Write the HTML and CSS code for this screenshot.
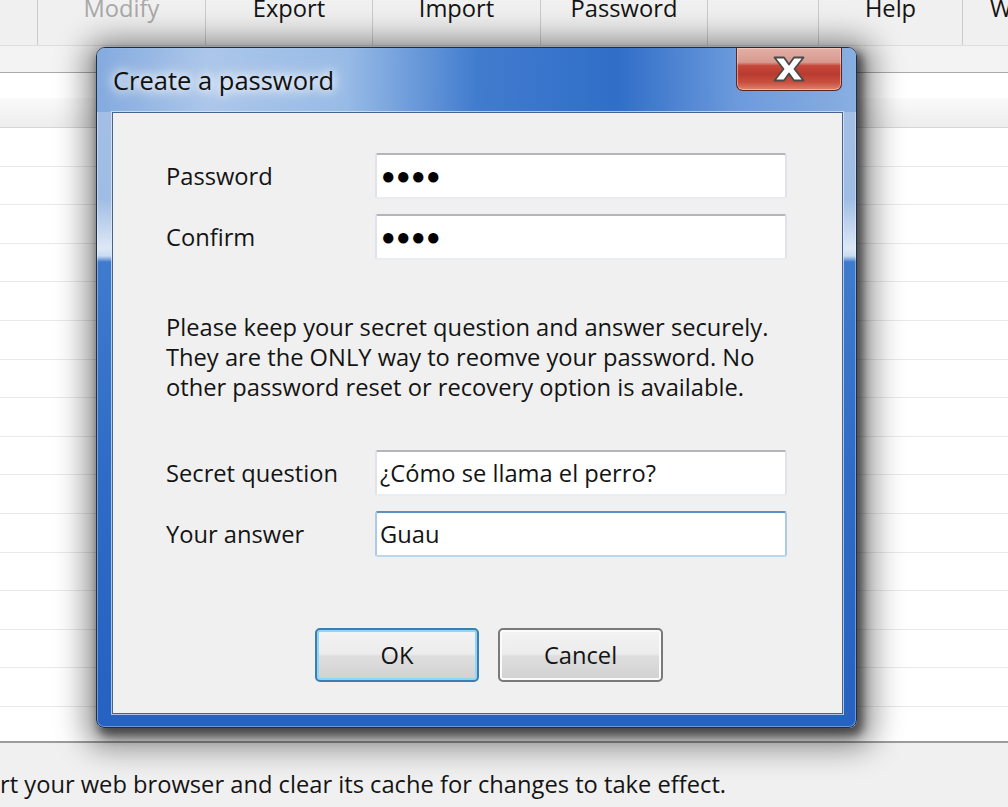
FILE: index.html
```html
<!DOCTYPE html>
<html lang="en">
<head>
<meta charset="utf-8">
<title>Create a password</title>
<link rel="stylesheet" href="styles.css">
</head>
<body>
<div class="app">
  <div class="toolbar">
    <div class="tb-item tb-first"></div>
    <div class="tb-item tb-wide disabled">Modify</div>
    <div class="tb-item tb-wide2">Export</div>
    <div class="tb-item tb-wide">Import</div>
    <div class="tb-item tb-wide2">Password</div>
    <div class="tb-item tb-blank"></div>
    <div class="tb-item tb-help">Help</div>
    <div class="tb-item tb-last">W</div>
  </div>
  <div class="subbar"></div>
  <div class="grid">
    <div class="grid-top"></div>
    <div class="grid-header"></div>
    <div class="row"></div>
    <div class="row"></div>
    <div class="row"></div>
    <div class="row"></div>
    <div class="row"></div>
    <div class="row"></div>
    <div class="row"></div>
    <div class="row"></div>
    <div class="row"></div>
    <div class="row"></div>
    <div class="row"></div>
    <div class="row"></div>
    <div class="row"></div>
    <div class="row"></div>
    <div class="row"></div>
    <div class="row"></div>
  </div>
  <div class="statusbar">rt your web browser and clear its cache for changes to take effect.</div>
</div>

<div class="dialog">
  <div class="titlebar">
    <div class="title">Create a password</div>
    <div class="close">
      <svg width="32" height="26" viewBox="0 0 32 26">
        <polygon points="1.5,1.5 11,1.5 16,8.5 21,1.5 30.5,1.5 21.5,13 30.5,24.5 21,24.5 16,17.5 11,24.5 1.5,24.5 10.5,13" fill="#ffffff" stroke="#4a4a4a" stroke-width="1.8" stroke-linejoin="round"/>
      </svg>
    </div>
  </div>
  <div class="client">
    <div class="form">
      <div class="label">Password</div>
      <div class="textbox"><span class="dots">●●●●</span></div>
      <div class="label">Confirm</div>
      <div class="textbox"><span class="dots">●●●●</span></div>
    </div>
    <p class="note">Please keep your secret question and answer securely.<br>They are the ONLY way to reomve your password. No<br>other password reset or recovery option is available.</p>
    <div class="form form-second">
      <div class="label">Secret question</div>
      <div class="textbox">¿Cómo se llama el perro?</div>
      <div class="label">Your answer</div>
      <div class="textbox focused">Guau</div>
    </div>
    <div class="buttons">
      <button class="btn btn-default">OK</button>
      <button class="btn btn-cancel">Cancel</button>
    </div>
  </div>
</div>
</body>
</html>
```

FILE: styles.css
```css
html, body {
  margin: 0;
  padding: 0;
}

body {
  width: 1008px;
  height: 807px;
  overflow: hidden;
  position: relative;
  background: #ffffff;
  font-family: "Open Sans", "Noto Sans", sans-serif;
  font-size: 23.7px;
  color: #141414;
}

.app {
  display: flex;
  flex-direction: column;
  height: 807px;
}

/* ---------- toolbar ---------- */
.toolbar {
  display: flex;
  height: 46px;
  flex: none;
  background: #f0f0f0;
  border-bottom: 1px solid #dedede;
  box-sizing: border-box;
  overflow: hidden;
}

.tb-item {
  flex: none;
  box-sizing: border-box;
  border-right: 1px solid #cbcbcb;
  text-align: center;
  line-height: 17px;
  white-space: nowrap;
  color: #141414;
}

.tb-item.disabled { color: #a9a9a9; }
.tb-first { width: 38px; }
.tb-wide { width: 168px; }
.tb-wide2 { width: 167px; }
.tb-blank { width: 111px; }
.tb-help { width: 144px; }
.tb-last {
  flex: 1;
  border-right: none;
  text-align: left;
  padding-left: 27px;
}

.subbar {
  flex: none;
  height: 27px;
  box-sizing: border-box;
  background: #f3f3f3;
  border-bottom: 1px solid #a9a9a9;
}

/* ---------- grid ---------- */
.grid {
  flex: 1;
  overflow: hidden;
  background: #ffffff;
  border-bottom: 2px solid #9c9c9c;
}

.grid-top { height: 25px; }

.grid-header {
  height: 30px;
  box-sizing: border-box;
  background: linear-gradient(180deg, #fafafa, #ededed);
  border-bottom: 1px solid #d6d6d6;
}

.row {
  height: 38.6px;
  box-sizing: border-box;
  border-bottom: 1px solid #e9e9e9;
}

.statusbar {
  flex: none;
  height: 64px;
  box-sizing: border-box;
  padding-top: 26px;
  line-height: 30px;
  background: #f0f0f0;
  white-space: nowrap;
  overflow: hidden;
}

/* ---------- dialog ---------- */
.dialog {
  position: absolute;
  left: 96px;
  top: 47px;
  width: 761px;
  height: 681px;
  box-sizing: border-box;
  border: 1px solid #1f2f47;
  border-radius: 9px 9px 8px 8px;
  background: linear-gradient(180deg,
    #a6c1e6 0px,
    #9fbce4 150px,
    #dce8f6 200px,
    #c9dbf0 208px,
    #3f7bcd 214px,
    #2f6cc6 420px,
    #2562c1 100%);
  box-shadow:
    4px 6px 10px 2px rgba(0, 0, 0, 0.55),
    3px 6px 30px 14px rgba(0, 0, 0, 0.42),
    inset 0 0 0 1px rgba(255, 255, 255, 0.35);
  display: flex;
  flex-direction: column;
}

.titlebar {
  flex: none;
  height: 64px;
  display: flex;
  align-items: flex-start;
  border-radius: 8px 8px 0 0;
  background: linear-gradient(90deg,
    rgba(128, 168, 222, 0.9) 0px,
    rgba(172, 199, 234, 0.9) 110px,
    rgba(150, 186, 230, 0.9) 250px,
    rgba(60, 120, 205, 0.95) 380px,
    rgba(48, 110, 200, 1) 520px,
    rgba(105, 152, 219, 0.95) 640px,
    rgba(134, 173, 225, 0.9) 100%);
}

.title {
  align-self: center;
  padding-left: 16px;
  font-size: 25.5px;
  color: #111111;
  white-space: nowrap;
  text-shadow: 0 0 8px #ffffff, 0 0 14px rgba(255, 255, 255, 0.95), 0 0 22px rgba(255, 255, 255, 0.8);
}

.close {
  margin-left: auto;
  margin-right: 14px;
  width: 106px;
  height: 43px;
  box-sizing: border-box;
  border: 1px solid #5b2620;
  border-top: none;
  border-radius: 0 0 7px 7px;
  background: linear-gradient(180deg,
    #e3b0a7 0%,
    #d7998f 34%,
    #c6493c 42%,
    #b93a2e 62%,
    #c9503f 82%,
    #de8470 100%);
  box-shadow: inset 0 0 0 1px rgba(255, 215, 205, 0.55);
  display: flex;
  align-items: center;
  justify-content: center;
}

.close svg { display: block; }

.client {
  flex: 1;
  margin: 0 13px 13px 15px;
  background: #f0f0f0;
  border: 1px solid #45638b;
  box-shadow: 0 0 0 1px rgba(225, 236, 250, 0.7);
  padding: 40px 0 0 53px;
}

.form {
  display: grid;
  grid-template-columns: 209px 412px;
  grid-auto-rows: 46px;
  row-gap: 15px;
  align-items: center;
}

.form-second { margin-top: 48px; }

.label { white-space: nowrap; }

.textbox {
  height: 46px;
  box-sizing: border-box;
  background: #ffffff;
  border: 2px solid;
  border-color: #b3b5ba #e1e3e8 #e9ecf0 #e1e3e8;
  border-radius: 3px;
  padding-left: 3px;
  display: flex;
  align-items: center;
  white-space: nowrap;
}

.textbox.focused {
  border-color: #5b8fc1 #a9cbe7 #bcd8ee #a9cbe7;
}

.dots {
  font-family: "Liberation Sans", sans-serif;
  font-size: 24px;
  letter-spacing: 0.5px;
  color: #000000;
  padding-left: 1px;
}

.note {
  margin: 52px 0 0;
  line-height: 30px;
}

.buttons {
  display: flex;
  gap: 19px;
  margin-top: 71px;
  margin-left: 149px;
}

.btn {
  height: 54px;
  box-sizing: border-box;
  font: inherit;
  color: #141414;
  border-radius: 5px;
  padding: 0;
  background: linear-gradient(180deg, #f3f3f3 0%, #ececec 48%, #dedede 52%, #d1d1d1 100%);
}

.btn-default {
  width: 164px;
  border: 2px solid #3d7db3;
  box-shadow: inset 0 0 0 2px #8ed8f5;
}

.btn-cancel {
  width: 165px;
  border: 2px solid #7a7a7a;
  box-shadow: inset 0 0 0 2px #fbfbfb;
}
```
